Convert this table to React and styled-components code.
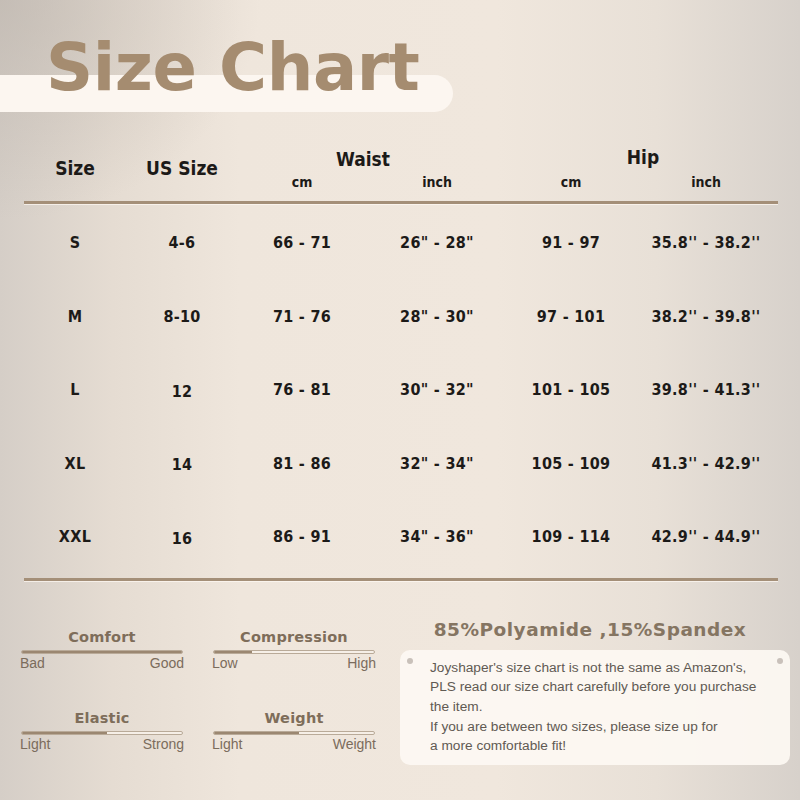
import React from "react";
import styled, { createGlobalStyle } from "styled-components";

const GlobalStyle = createGlobalStyle`
  html, body {
    margin: 0;
    padding: 0;
  }
  #root {
    width: 800px;
    height: 800px;
  }
`;

const HEAD_FONT = `"DejaVu Sans", Verdana, sans-serif`;
const CELL_FONT = `"DejaVu Sans Condensed", "DejaVu Sans", sans-serif`;
const BODY_FONT = `"Liberation Sans", Arial, sans-serif`;

const rows = [
  ["S", "4-6", "66 - 71", `26" - 28"`, "91 - 97", "35.8'' - 38.2''"],
  ["M", "8-10", "71 - 76", `28" - 30"`, "97 - 101", "38.2'' - 39.8''"],
  ["L", "12", "76 - 81", `30" - 32"`, "101 - 105", "39.8'' - 41.3''"],
  ["XL", "14", "81 - 86", `32" - 34"`, "105 - 109", "41.3'' - 42.9''"],
  ["XXL", "16", "86 - 91", `34" - 36"`, "109 - 114", "42.9'' - 44.9''"],
];

const meters = [
  { title: "Comfort", low: "Bad", high: "Good", level: 100 },
  { title: "Compression", low: "Low", high: "High", level: 24 },
  { title: "Elastic", low: "Light", high: "Strong", level: 53 },
  { title: "Weight", low: "Light", high: "Weight", level: 53 },
];

const Page = styled.div`
  width: 800px;
  height: 800px;
  overflow: hidden;
  display: flex;
  flex-direction: column;
  background:
    radial-gradient(ellipse 260px 220px at 0% 0%, rgba(186, 178, 170, 0.6), rgba(186, 178, 170, 0)),
    linear-gradient(90deg, #d5cec7 0%, #e5dcd2 14%, #efe6dc 30%, #f0e7dd 62%, #e8e0d7 82%, #d7d1cb 100%);
`;

const TitleBar = styled.header`
  position: relative;
  height: 132px;
  padding: 29px 0 0 46px;
  box-sizing: border-box;
  &::before {
    content: "";
    position: absolute;
    left: 0;
    top: 75px;
    width: 453px;
    height: 37px;
    border-radius: 0 19px 19px 0;
    background: #fcf6f0;
  }
`;

const Title = styled.h1`
  position: relative;
  margin: 0;
  font-family: ${HEAD_FONT};
  font-weight: 700;
  font-size: 65.5px;
  line-height: 76px;
  letter-spacing: -0.4px;
  color: #a58c70;
`;

const Table = styled.section`
  margin: 0 22px 0 24px;
  display: grid;
  grid-template-columns: 102px 112px 128px 142px 126px 144px;
  font-family: ${CELL_FONT};
  font-weight: 700;
  color: #1c1a18;
`;

const HeadCell = styled.div`
  grid-row: span 2;
  display: flex;
  align-items: center;
  justify-content: center;
  padding-top: 10px;
  height: 62px;
  box-sizing: border-box;
  font-size: 19px;
`;

const GroupHead = styled.div`
  grid-column: span 2;
  text-align: center;
  font-size: 19px;
  line-height: 22px;
  padding-top: ${(p) => p.$top}px;
  padding-right: ${(p) => p.$shift}px;
  box-sizing: border-box;
`;

const UnitHead = styled.div`
  text-align: center;
  font-size: 14px;
  line-height: 16px;
  padding-top: ${(p) => p.$top}px;
`;

const Rule = styled.div`
  grid-column: 1 / -1;
  height: 3px;
  background: #a48f78;
  box-shadow: 0 1px 0 rgba(255, 250, 244, 0.7);
  margin-top: ${(p) => p.$top || 0}px;
`;

const Cell = styled.div`
  height: 73.5px;
  display: flex;
  align-items: center;
  justify-content: center;
  font-size: 16px;
  letter-spacing: 0.3px;
  white-space: nowrap;
  padding-top: ${(p) => (p.$low ? 3 : 0)}px;
  box-sizing: border-box;
`;

const RowGap = styled.div`
  grid-column: 1 / -1;
  height: 2px;
`;

const Bottom = styled.section`
  display: flex;
  padding: 46px 10px 0 20px;
`;

const MeterGrid = styled.div`
  display: grid;
  grid-template-columns: 164px 164px;
  column-gap: 28px;
  row-gap: 37px;
  align-content: start;
`;

const Meter = styled.div`
  display: flex;
  flex-direction: column;
`;

const MeterTitle = styled.div`
  text-align: center;
  font-family: ${HEAD_FONT};
  font-weight: 700;
  font-size: 14.5px;
  line-height: 18px;
  color: #7e6d5a;
  letter-spacing: 0.2px;
  padding-top: 1px;
`;

const Track = styled.div`
  margin: 4px 1px 0 1px;
  height: 4px;
  border: 1px solid #b9aa98;
  border-radius: 2px;
  background: #f6efe7;
  box-sizing: border-box;
  overflow: hidden;
`;

const Fill = styled.div`
  height: 100%;
  background: #9b8771;
`;

const MeterLabels = styled.div`
  display: flex;
  justify-content: space-between;
  font-family: ${BODY_FONT};
  font-size: 14px;
  line-height: 16px;
  margin-top: 1px;
  color: #7b6c5c;
`;

const Info = styled.div`
  margin-left: 24px;
  width: 390px;
  display: flex;
  flex-direction: column;
`;

const Material = styled.div`
  text-align: center;
  font-family: ${HEAD_FONT};
  font-weight: 700;
  font-size: 18.5px;
  line-height: 22px;
  letter-spacing: 0.5px;
  color: #857562;
  margin-top: -8px;
  padding-right: 10px;
`;

const Note = styled.div`
  position: relative;
  margin-top: 9px;
  padding: 8px 12px 9px 30px;
  border-radius: 10px;
  background: rgba(253, 248, 243, 0.92);
  font-family: ${BODY_FONT};
  font-size: 13.7px;
  line-height: 19.7px;
  color: #615a53;
  white-space: nowrap;
`;

const Pin = styled.span`
  position: absolute;
  top: 8px;
  ${(p) => (p.$right ? "right: 7px;" : "left: 7px;")}
  width: 6px;
  height: 6px;
  border-radius: 50%;
  background: #c9c1ba;
`;

function App() {
  return (
    <Page>
      <GlobalStyle />
      <TitleBar>
        <Title>Size Chart</Title>
      </TitleBar>
      <Table>
        <HeadCell>Size</HeadCell>
        <HeadCell>US Size</HeadCell>
        <GroupHead $top={16} $shift={20}>Waist</GroupHead>
        <GroupHead $top={14} $shift={0}>Hip</GroupHead>
        <UnitHead $top={-3}>cm</UnitHead>
        <UnitHead $top={-4}>inch</UnitHead>
        <UnitHead $top={-4}>cm</UnitHead>
        <UnitHead $top={-4}>inch</UnitHead>
        <Rule $top={7} />
        <RowGap />
        {rows.map((row) =>
          row.map((value, i) => (
            <Cell key={row[0] + i} $low={i === 1 && /^(L|XL|XXL)$/.test(row[0])}>
              {value}
            </Cell>
          ))
        )}
        <Rule $top={4} />
      </Table>
      <Bottom>
        <MeterGrid>
          {meters.map((m) => (
            <Meter key={m.title}>
              <MeterTitle>{m.title}</MeterTitle>
              <Track>
                <Fill style={{ width: `${m.level}%` }} />
              </Track>
              <MeterLabels>
                <span>{m.low}</span>
                <span>{m.high}</span>
              </MeterLabels>
            </Meter>
          ))}
        </MeterGrid>
        <Info>
          <Material>85%Polyamide ,15%Spandex</Material>
          <Note>
            <Pin />
            <Pin $right />
            Joyshaper's size chart is not the same as Amazon's,
            <br />
            PLS read our size chart carefully before you purchase
            <br />
            the item.
            <br />
            If you are between two sizes, please size up for
            <br />
            a more comfortable fit!
          </Note>
        </Info>
      </Bottom>
    </Page>
  );
}

export default App;
